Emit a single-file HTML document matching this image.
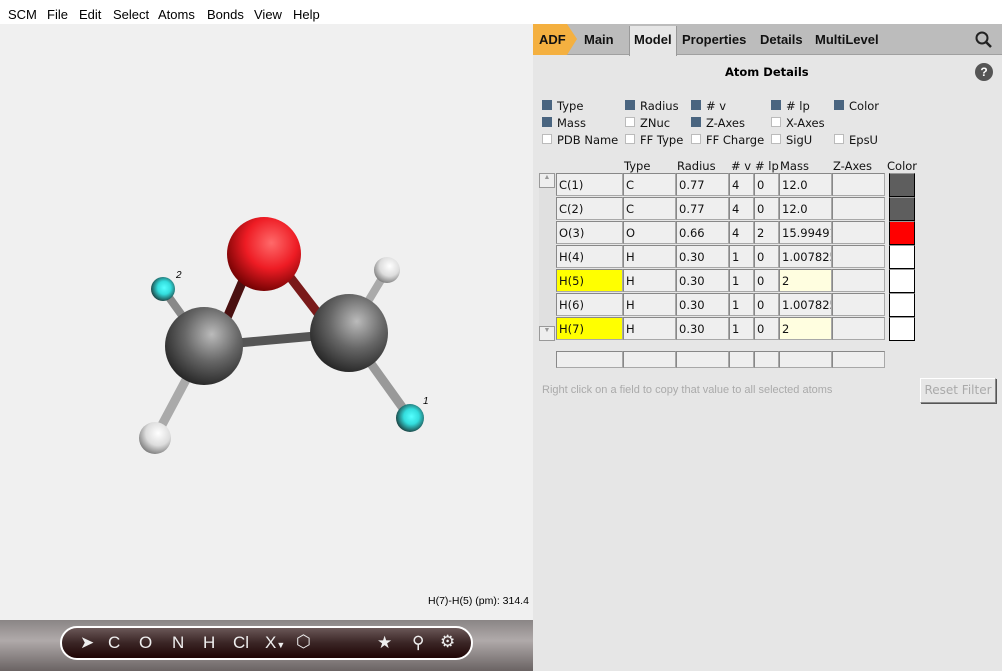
<!DOCTYPE html>
<html><head><meta charset="utf-8"><style>
*{margin:0;padding:0;box-sizing:border-box}
body{width:1002px;height:671px;overflow:hidden;background:#fff;font-family:"Liberation Sans",sans-serif;font-size:13px;position:relative}
.menu{position:absolute;left:0;top:0;width:1002px;height:24px;background:#fff}
.menu span{position:absolute;top:7px;font-size:13px;color:#000}
.left{position:absolute;left:0;top:24px;width:533px;height:647px;background:#f0f0f0}
.right{position:absolute;left:533px;top:24px;width:469px;height:647px;background:#e6e6e6}
.tabs{position:absolute;left:0;top:0;width:469px;height:31px;background:#bcbcbc;border-bottom:1px solid #a0a0a0}
.tabs b{position:absolute;top:8px;font-size:13px;color:#111}
.cb{position:absolute;font-size:12.5px;color:#111;font-family:"DejaVu Sans",sans-serif;font-size:11.5px}
.cb i{position:absolute;left:-15px;top:1px;width:10px;height:10px;background:#fff;border:1px solid #bbb}
.cb i.on{background:#4a6580;border-color:#4a6580}
.cell{position:absolute;height:23px;background:#efefef;border:1px solid #a8a8a8;border-top-color:#888;border-left-color:#888;font-family:"DejaVu Sans",sans-serif;font-size:11.5px;padding:4px 0 0 2px;color:#111;white-space:nowrap;overflow:hidden}
.hd{position:absolute;top:159px;font-family:"DejaVu Sans",sans-serif;font-size:11.5px;color:#111}
</style></head><body>
<div class="menu">
<span style="left:8px">SCM</span><span style="left:47px">File</span><span style="left:79px">Edit</span><span style="left:113px">Select</span><span style="left:158px">Atoms</span><span style="left:207px">Bonds</span><span style="left:254px">View</span><span style="left:293px">Help</span>
</div>
<div class="left">
<svg width="533" height="647" style="position:absolute;left:0;top:0">
<defs>
<radialGradient id="gc" cx="0.6" cy="0.35" r="0.7"><stop offset="0" stop-color="#bbb"/><stop offset="0.5" stop-color="#666"/><stop offset="1" stop-color="#222"/></radialGradient>
<radialGradient id="go" cx="0.6" cy="0.35" r="0.7"><stop offset="0" stop-color="#ff6a6a"/><stop offset="0.5" stop-color="#ee1c24"/><stop offset="1" stop-color="#6a0000"/></radialGradient>
<radialGradient id="gh" cx="0.6" cy="0.35" r="0.7"><stop offset="0" stop-color="#fff"/><stop offset="0.55" stop-color="#ddd"/><stop offset="1" stop-color="#777"/></radialGradient>
<radialGradient id="gy" cx="0.55" cy="0.45" r="0.6"><stop offset="0" stop-color="#5ff"/><stop offset="0.45" stop-color="#3dd"/><stop offset="1" stop-color="#1a3333"/></radialGradient>
</defs>
<g stroke-linecap="round">
<line x1="204" y1="322" x2="349" y2="309" stroke="#555" stroke-width="9"/>
<line x1="220" y1="310" x2="250" y2="240" stroke="#4a1010" stroke-width="9"/>
<line x1="330" y1="305" x2="280" y2="240" stroke="#7a1a1a" stroke-width="9"/>
<line x1="204" y1="322" x2="163" y2="265" stroke="#888" stroke-width="8"/>
<line x1="204" y1="322" x2="155" y2="414" stroke="#aaa" stroke-width="9"/>
<line x1="349" y1="309" x2="387" y2="246" stroke="#aaa" stroke-width="8"/>
<line x1="349" y1="309" x2="410" y2="394" stroke="#999" stroke-width="9"/>
</g>
<circle cx="264" cy="230" r="37" fill="url(#go)"/>
<circle cx="163" cy="265" r="12" fill="url(#gy)"/>
<circle cx="387" cy="246" r="13" fill="url(#gh)"/>
<circle cx="204" cy="322" r="39" fill="url(#gc)"/>
<circle cx="349" cy="309" r="39" fill="url(#gc)"/>
<circle cx="155" cy="414" r="16" fill="url(#gh)"/>
<circle cx="410" cy="394" r="14" fill="url(#gy)"/>
<text x="176" y="254" font-size="10" font-style="italic" font-family="Liberation Sans">2</text>
<text x="423" y="380" font-size="10" font-style="italic" font-family="Liberation Sans">1</text>
<text x="428" y="580" font-size="10.5" font-family="Liberation Sans" fill="#000">H(7)-H(5) (pm): 314.4</text>
</svg>
<div style="position:absolute;left:0;top:596px;width:533px;height:51px;background:linear-gradient(#8a8585,#b0aaaa 40%,#6a6363)"></div>
<div style="position:absolute;left:60px;top:602px;width:413px;height:34px;border:2px solid #fff;border-radius:17px;background:linear-gradient(#6a5757,#3a2525 50%,#200505);color:#eee;font-size:17px">
<span style="position:absolute;left:18px;top:5px">➤</span>
<span style="position:absolute;left:46px;top:5px">C</span><span style="position:absolute;left:77px;top:5px">O</span><span style="position:absolute;left:110px;top:5px">N</span><span style="position:absolute;left:141px;top:5px">H</span><span style="position:absolute;left:171px;top:5px">Cl</span><span style="position:absolute;left:203px;top:5px">X<small style="font-size:9px">▼</small></span><span style="position:absolute;left:234px;top:4px">⬡</span>
<span style="position:absolute;left:315px;top:5px">★</span><span style="position:absolute;left:350px;top:5px">⚲</span><span style="position:absolute;left:378px;top:4px">⚙</span>
</div>
</div>
<div class="right">
<div class="tabs">
<div style="position:absolute;left:0;top:0;width:44px;height:31px;background:#f4b040;clip-path:polygon(0 0,34px 0,44px 15px,34px 31px,0 31px)"></div>
<b style="left:6px">ADF</b><b style="left:51px">Main</b>
<div style="position:absolute;left:96px;top:2px;width:48px;height:30px;background:#e6e6e6;border-left:1px solid #999;border-right:1px solid #999"></div>
<b style="left:101px">Model</b><b style="left:149px">Properties</b><b style="left:227px">Details</b><b style="left:282px">MultiLevel</b>
<svg style="position:absolute;left:442px;top:7px" width="18" height="18"><circle cx="7" cy="7" r="5.5" stroke="#222" stroke-width="2" fill="none"/><line x1="11" y1="11" x2="16" y2="16" stroke="#222" stroke-width="2.5"/></svg>
</div>
<div style="position:absolute;left:192px;top:41px;font-weight:bold;font-size:11.5px;font-family:'DejaVu Sans',sans-serif">Atom Details</div>
<div style="position:absolute;left:442px;top:39px;width:18px;height:18px;border-radius:9px;background:#555;color:#fff;font-weight:bold;font-size:12px;text-align:center;line-height:18px">?</div>
<div class="cb" style="left:24px;top:75px"><i class="on"></i>Type</div>
<div class="cb" style="left:107px;top:75px"><i class="on"></i>Radius</div>
<div class="cb" style="left:173px;top:75px"><i class="on"></i># v</div>
<div class="cb" style="left:253px;top:75px"><i class="on"></i># lp</div>
<div class="cb" style="left:316px;top:75px"><i class="on"></i>Color</div>
<div class="cb" style="left:24px;top:92px"><i class="on"></i>Mass</div>
<div class="cb" style="left:107px;top:92px"><i></i>ZNuc</div>
<div class="cb" style="left:173px;top:92px"><i class="on"></i>Z-Axes</div>
<div class="cb" style="left:253px;top:92px"><i></i>X-Axes</div>
<div class="cb" style="left:24px;top:109px"><i></i>PDB Name</div>
<div class="cb" style="left:107px;top:109px"><i></i>FF Type</div>
<div class="cb" style="left:173px;top:109px"><i></i>FF Charge</div>
<div class="cb" style="left:253px;top:109px"><i></i>SigU</div>
<div class="cb" style="left:316px;top:109px"><i></i>EpsU</div>
<div class="hd" style="left:91px;top:135px">Type</div><div class="hd" style="left:144px;top:135px">Radius</div><div class="hd" style="left:198px;top:135px"># v</div><div class="hd" style="left:222px;top:135px"># lp</div><div class="hd" style="left:247px;top:135px">Mass</div><div class="hd" style="left:300px;top:135px">Z-Axes</div><div class="hd" style="left:354px;top:135px">Color</div>
<div style="position:absolute;left:6px;top:149px;width:17px;height:168px;background:#e0e0e0"></div>
<div style="position:absolute;left:6px;top:149px;width:16px;height:15px;border:1px solid #999;background:#eee;font-size:7px;color:#999;text-align:center">▲</div>
<div style="position:absolute;left:6px;top:302px;width:16px;height:15px;border:1px solid #999;background:#eee;font-size:7px;color:#999;text-align:center">▼</div>
<div id="tbl"></div>
<div style="position:absolute;left:387px;top:354px;width:76px;height:25px;border:1px solid #888;border-top-color:#fff;border-left-color:#fff;box-shadow:1px 1px 0 #555;background:#e6e6e6;color:#aaa;font-size:12px;text-align:center;line-height:23px;font-family:'DejaVu Sans',sans-serif">Reset Filter</div>
<div style="position:absolute;left:9px;top:360px;color:#aaa;font-size:11px">Right click on a field to copy that value to all selected atoms</div>
</div>
<script>
var cols=[[23,67],[90,53],[143,53],[196,25],[221,25],[246,53],[299,53]];
var rows=[["C(1)","C","0.77","4","0","12.0","","#5e5e5e"],["C(2)","C","0.77","4","0","12.0","","#5e5e5e"],["O(3)","O","0.66","4","2","15.99491","","#ff0000"],["H(4)","H","0.30","1","0","1.007825","","#fff"],["H(5)","H","0.30","1","0","2","","#fff"],["H(6)","H","0.30","1","0","1.007825","","#fff"],["H(7)","H","0.30","1","0","2","","#fff"]];
var h="";
rows.forEach(function(r,i){var y=149+i*24;
cols.forEach(function(c,j){var bg="";if(j==0&&(i==4||i==6))bg="background:#ffff00;";if(j==5&&(i==4||i==6))bg="background:#fffee0;";
h+='<div class="cell" style="left:'+c[0]+'px;top:'+y+'px;width:'+c[1]+'px;'+bg+'">'+r[j]+'</div>';});
h+='<div style="position:absolute;left:356px;top:'+y+'px;width:26px;height:24px;background:'+r[7]+';border:1px solid #000;border-top-color:#999"></div>';});
cols.forEach(function(c){h+='<div class="cell" style="left:'+c[0]+'px;top:327px;width:'+c[1]+'px;height:17px"></div>';});
document.getElementById("tbl").innerHTML=h;
</script>
</body></html>
